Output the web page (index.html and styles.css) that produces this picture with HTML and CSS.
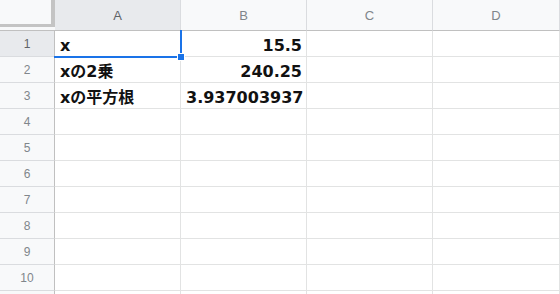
FILE: index.html
```html
<!DOCTYPE html>
<html lang="ja">
<head>
  <meta charset="UTF-8" />
  <title>シート1</title>
  <link rel="stylesheet" href="styles.css">
</head>
<body>
<div class="sheet">
  <div class="corner"><div class="corner-bar"></div></div>
  <div class="colhead sel">A</div>
  <div class="colhead">B</div>
  <div class="colhead">C</div>
  <div class="colhead">D</div>

  <div class="rowhead sel">1</div>
  <div class="cell active">x<span class="handle"></span></div>
  <div class="cell num">15.5</div>
  <div class="cell"></div>
  <div class="cell"></div>

  <div class="rowhead">2</div>
  <div class="cell">xの2乗</div>
  <div class="cell num">240.25</div>
  <div class="cell"></div>
  <div class="cell"></div>

  <div class="rowhead">3</div>
  <div class="cell">xの平方根</div>
  <div class="cell num">3.937003937</div>
  <div class="cell"></div>
  <div class="cell"></div>

  <div class="rowhead">4</div><div class="cell"></div><div class="cell"></div><div class="cell"></div><div class="cell"></div>
  <div class="rowhead">5</div><div class="cell"></div><div class="cell"></div><div class="cell"></div><div class="cell"></div>
  <div class="rowhead">6</div><div class="cell"></div><div class="cell"></div><div class="cell"></div><div class="cell"></div>
  <div class="rowhead">7</div><div class="cell"></div><div class="cell"></div><div class="cell"></div><div class="cell"></div>
  <div class="rowhead">8</div><div class="cell"></div><div class="cell"></div><div class="cell"></div><div class="cell"></div>
  <div class="rowhead">9</div><div class="cell"></div><div class="cell"></div><div class="cell"></div><div class="cell"></div>
  <div class="rowhead">10</div><div class="cell"></div><div class="cell"></div><div class="cell"></div><div class="cell"></div>
  <div class="rowhead"></div><div class="cell"></div><div class="cell"></div><div class="cell"></div><div class="cell"></div>
</div>
</body>
</html>
```

FILE: styles.css
```css
* {
  box-sizing: border-box;
}
html, body {
  margin: 0;
  height: 100%;
  overflow: hidden;
  background: #fff;
}

.sheet {
  display: grid;
  grid-template-columns: 55px 126px 126px 126px 127px;
  grid-template-rows: 31px repeat(11, 26px);
  width: 560px;
}

/* 左上の角 */
.corner {
  background: #f8f9fa;
  border-bottom: 1px solid #c0c0c0;
}
.corner-bar {
  height: 27px;
  border-right: 4px solid #c4c4c4;
  border-bottom: 3px solid #c4c4c4;
}

.colhead {
  background: #f8f9fa;
  border-right: 1px solid #dadcdf;
  border-bottom: 1px solid #c0c0c0;
  color: #80868b;
  font-family: 'Liberation Sans', Arial, sans-serif;
  font-size: 13px;
  display: flex;
  align-items: center;
  justify-content: center;
  padding-top: 1px;
}

.rowhead {
  background: #f8f9fa;
  border-right: 1px solid #c0c0c0;
  border-bottom: 1px solid #dadcdf;
  color: #80868b;
  font-family: 'Liberation Sans', Arial, sans-serif;
  font-size: 12px;
  display: flex;
  align-items: center;
  justify-content: center;
}

.colhead.sel,
.rowhead.sel {
  background: #e8eaed;
  color: #5f6368;
}

.cell {
  border-right: 1px solid #e2e3e3;
  border-bottom: 1px solid #e2e3e3;
  font-family: 'DejaVu Sans', 'Noto Sans CJK JP', sans-serif;
  font-weight: bold;
  font-size: 16px;
  color: #111;
  line-height: 25px;
  padding: 2px 4px 0 5px;
  white-space: nowrap;
}
.cell.num {
  text-align: right;
  padding-right: 4px;
}

/* 選択中のセル */
.cell.active {
  position: relative;
}
.cell.active::after {
  content: '';
  position: absolute;
  top: -1px;
  left: -1px;
  right: -2px;
  bottom: -2px;
  border-right: 2px solid #1a73e8;
  border-bottom: 2px solid #1a73e8;
}
.handle {
  position: absolute;
  right: -5px;
  bottom: -5px;
  width: 8px;
  height: 8px;
  background: #1a73e8;
  border: 1px solid #fff;
  z-index: 1;
}
```
